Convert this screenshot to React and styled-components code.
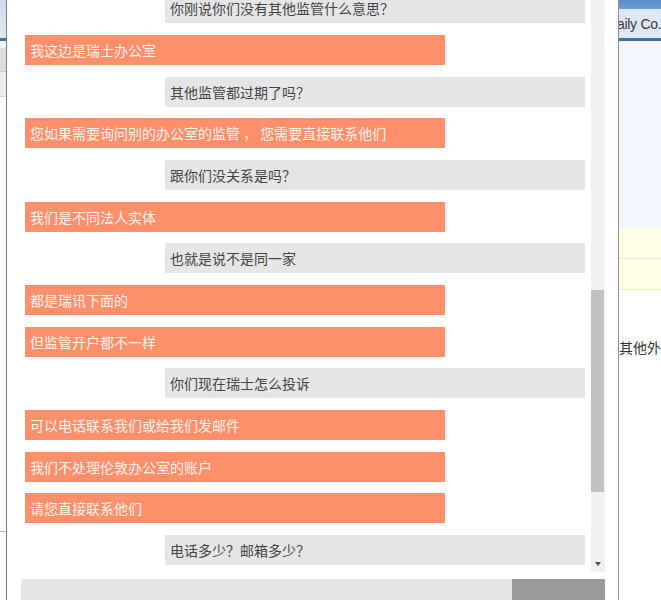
import React from 'react';
import styled, { createGlobalStyle } from 'styled-components';

const GlobalStyle = createGlobalStyle`
  html, body {
    margin: 0;
    padding: 0;
    background: #ffffff;
  }
  body {
    font-family: "Noto Sans CJK SC", "Noto Sans", "Liberation Sans", sans-serif;
    overflow: hidden;
  }
`;

const Screen = styled.div`
  display: grid;
  grid-template-columns: 6px 613px 42px;
  width: 661px;
  height: 600px;
  overflow: hidden;
`;

const SideStrip = styled.div`
  display: flex;
  flex-direction: column;
  overflow: hidden;
`;

const Band = styled.div`
  flex-shrink: 0;
  height: ${(props) => props.$h}px;
  background: ${(props) => props.$bg};
  border-bottom: ${(props) => (props.$line ? `1px solid ${props.$line}` : 'none')};
`;

const FillBand = styled.div`
  flex: 1;
  background: ${(props) => props.$bg};
`;

const Dialog = styled.div`
  display: flex;
  flex-direction: column;
  background: #ffffff;
  border-left: 1px solid #7d7d7d;
  border-right: 1px solid #8e8e8e;
  overflow: hidden;
`;

const ChatArea = styled.div`
  display: flex;
  height: 572px;
  flex-shrink: 0;
`;

const Viewport = styled.div`
  flex: 1;
  overflow: hidden;
`;

const MessageList = styled.div`
  display: flex;
  flex-direction: column;
  gap: 11.67px;
  margin-top: -6.67px;
  padding: 0 6px 0 18px;
`;

const Bubble = styled.div`
  box-sizing: border-box;
  width: 420px;
  height: 30px;
  line-height: 30px;
  padding: 0 5px;
  font-size: 14px;
  white-space: nowrap;
  overflow: hidden;
  align-self: ${(props) => (props.$mine ? 'flex-end' : 'flex-start')};
  background: ${(props) => (props.$mine ? '#e6e6e6' : '#fd8f6b')};
  color: ${(props) => (props.$mine ? '#444444' : '#fff3ee')};
`;

const Scrollbar = styled.div`
  display: flex;
  flex-direction: column;
  width: 14px;
  margin-right: 13px;
  padding-top: 290px;
  background: #f0f0f0;
`;

const Thumb = styled.div`
  height: 202px;
  margin-right: 1px;
  background: #c1c1c1;
`;

const DownArrow = styled.div`
  margin: auto auto 6px;
  width: 0;
  height: 0;
  border-left: 3.5px solid transparent;
  border-right: 3.5px solid transparent;
  border-top: 4px solid #505050;
`;

const InputRow = styled.div`
  display: flex;
  flex: 1;
  margin-top: 7px;
  padding: 0 13px 0 14px;
`;

const TextInput = styled.div`
  flex: 1;
  background: #e6e6e6;
  border-top: 1px solid #ececec;
`;

const SendButton = styled.div`
  width: 93px;
  background: #9a9a9a;
`;

const RightPanel = styled.div`
  display: flex;
  flex-direction: column;
  overflow: hidden;
  background: #ffffff;
`;

const TopBar = styled.div`
  height: 9px;
  background: linear-gradient(#5a8ccb, #6e9fd8);
`;

const TitleRow = styled.div`
  height: 29px;
  line-height: 31px;
  background: #dde8f4;
  font-family: "Liberation Sans", "Noto Sans", sans-serif;
  font-size: 14px;
  letter-spacing: -0.3px;
  color: #3a3a3a;
  white-space: nowrap;
  text-indent: -2px;
`;

const TitleLine = styled.div`
  height: 3px;
  background: #3f70a8;
`;

const LightArea = styled.div`
  height: 187px;
  background: #f3f6fc;
`;

const YellowRow = styled.div`
  box-sizing: border-box;
  height: 31px;
  background: #fffde6;
  border-bottom: 1px solid #efebc8;
`;

const PanelText = styled.div`
  margin-top: 42px;
  line-height: 30px;
  font-size: 14px;
  color: #333333;
  white-space: nowrap;
`;

const messages = [
  { mine: true, text: '你刚说你们没有其他监管什么意思？' },
  { mine: false, text: '我这边是瑞士办公室' },
  { mine: true, text: '其他监管都过期了吗？' },
  { mine: false, text: '您如果需要询问别的办公室的监管 ， 您需要直接联系他们' },
  { mine: true, text: '跟你们没关系是吗？' },
  { mine: false, text: '我们是不同法人实体' },
  { mine: true, text: '也就是说不是同一家' },
  { mine: false, text: '都是瑞讯下面的' },
  { mine: false, text: '但监管开户都不一样' },
  { mine: true, text: '你们现在瑞士怎么投诉' },
  { mine: false, text: '可以电话联系我们或给我们发邮件' },
  { mine: false, text: '我们不处理伦敦办公室的账户' },
  { mine: false, text: '请您直接联系他们' },
  { mine: true, text: '电话多少？邮箱多少？' },
];

export default function App() {
  return (
    <>
      <GlobalStyle />
      <Screen>
        <SideStrip>
          <Band $h={38} $bg="linear-gradient(#cfdcec, #dfe8f3)" />
          <Band $h={3} $bg="#4a6f9c" />
          <Band $h={7} $bg="#f1f4f8" />
          <Band $h={23} $bg="#dcdcdc" $line="#c8c8c8" />
          <Band $h={24} $bg="#ebebeb" $line="#d6d6d6" />
          <Band $h={434} $bg="#fbfbfb" $line="#b5b5b5" />
          <FillBand $bg="#ffffff" />
        </SideStrip>

        <Dialog>
          <ChatArea>
            <Viewport>
              <MessageList>
                {messages.map((m, i) => (
                  <Bubble key={i} $mine={m.mine}>
                    {m.text}
                  </Bubble>
                ))}
              </MessageList>
            </Viewport>
            <Scrollbar>
              <Thumb />
              <DownArrow />
            </Scrollbar>
          </ChatArea>
          <InputRow>
            <TextInput />
            <SendButton />
          </InputRow>
        </Dialog>

        <RightPanel>
          <TopBar />
          <TitleRow>aily Co.</TitleRow>
          <TitleLine />
          <LightArea />
          <YellowRow />
          <YellowRow />
          <PanelText>其他外</PanelText>
        </RightPanel>
      </Screen>
    </>
  );
}
